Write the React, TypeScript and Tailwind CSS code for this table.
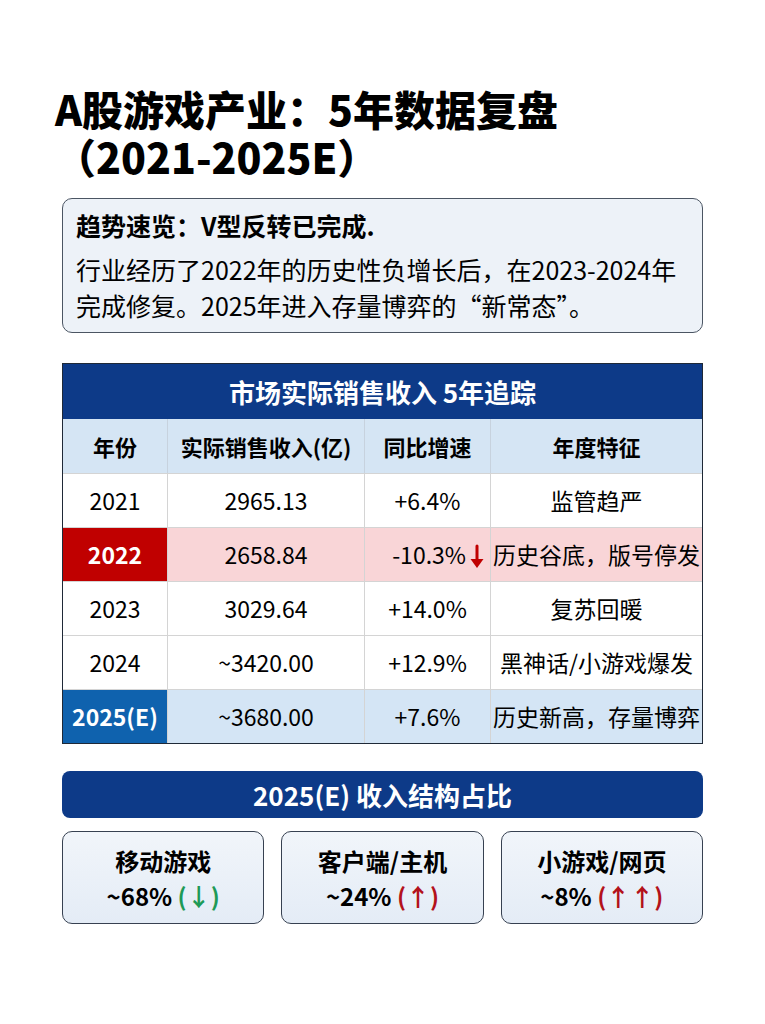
import React from 'react';

type Row = {
  year: string;
  revenue: string;
  growth: string;
  note: string;
  tone?: 'low' | 'est';
};

const ROWS: Row[] = [
  { year: '2021', revenue: '2965.13', growth: '+6.4%', note: '监管趋严' },
  { year: '2022', revenue: '2658.84', growth: '-10.3%', note: '历史谷底，版号停发', tone: 'low' },
  { year: '2023', revenue: '3029.64', growth: '+14.0%', note: '复苏回暖' },
  { year: '2024', revenue: '~3420.00', growth: '+12.9%', note: '黑神话/小游戏爆发' },
  { year: '2025(E)', revenue: '~3680.00', growth: '+7.6%', note: '历史新高，存量博弈', tone: 'est' },
];

const FONT = { fontFamily: '"Noto Sans CJK SC", "Noto Sans", sans-serif' };

const COLS = 'grid grid-cols-[105px_197px_126px_1fr]';

export default function App() {
  return (
    <div className="min-h-[1024px] w-[765px] bg-white text-black" style={FONT}>
      <div className="px-[62px] pt-[84px] pb-10">
        {/* 标题 */}
        <h1 className="-ml-[7px] text-[41px] font-black leading-[48px]">
          <div>A股游戏产业：5年数据复盘</div>
          <div>（2021-2025E）</div>
        </h1>

        {/* 趋势速览 */}
        <div className="mt-[18px] rounded-[10px] border-[1.5px] border-[#4b5563] bg-[#edf2f8] px-[13px] pt-[8px] pb-[9px]">
          <div className="text-[25px] font-bold leading-[36px]">趋势速览：V型反转已完成.</div>
          <p className="mt-[8px] whitespace-nowrap text-[25px] leading-[36px]">
            行业经历了2022年的历史性负增长后，在2023-2024年
            <br />
            完成修复。2025年进入存量博弈的“新常态”。
          </p>
        </div>

        {/* 销售收入表 */}
        <div className="mt-[30px] border-[1.5px] border-[#1f2937]">
          <div className="flex h-[55px] items-center justify-center bg-[#0d3a88] text-[26px] font-bold text-white">
            市场实际销售收入 5年追踪
          </div>
          <div className={`${COLS} h-[54px] bg-[#d5e5f4] text-[22px] font-bold`}>
            <div className="flex items-center justify-center border-r border-[#c7d2de]">年份</div>
            <div className="flex items-center justify-center border-r border-[#c7d2de]">实际销售收入(亿)</div>
            <div className="flex items-center justify-center border-r border-[#c7d2de]">同比增速</div>
            <div className="flex items-center justify-center">年度特征</div>
          </div>
          {ROWS.map(r => {
            const rowBg = r.tone === 'low' ? 'bg-[#f9d5d7]' : r.tone === 'est' ? 'bg-[#d4e5f5]' : 'bg-white';
            const yearCell =
              r.tone === 'low'
                ? 'bg-[#c00000] text-white font-bold'
                : r.tone === 'est'
                ? 'bg-[#0f62ae] text-white font-bold'
                : '';
            return (
              <div key={r.year} className={`${COLS} h-[54px] border-t border-[#d4d4d4] text-[23px] ${rowBg}`}>
                <div className={`flex items-center justify-center border-r border-[#d4d4d4] ${yearCell}`}>{r.year}</div>
                <div className="flex items-center justify-center border-r border-[#d4d4d4]">{r.revenue}</div>
                <div
                  className={`flex items-center border-r border-[#d4d4d4] ${
                    r.tone === 'low' ? 'justify-end pr-[4px]' : 'justify-center'
                  }`}
                >
                  {r.growth}
                  {r.tone === 'low' && (
                    <svg width="18" height="26" viewBox="0 0 18 26" className="ml-[2px] mt-[4px]">
                      <path d="M9 2 V18" stroke="#c00000" strokeWidth="3" strokeLinecap="round" />
                      <path d="M2.5 15 L9 24 L15.5 15 Z" fill="#c00000" />
                    </svg>
                  )}
                </div>
                <div className="flex items-center justify-center whitespace-nowrap">{r.note}</div>
              </div>
            );
          })}
        </div>

        {/* 收入结构 */}
        <div className="mt-[27px] flex h-[47px] items-center justify-center rounded-[8px] bg-[#0d3a88] text-[26px] font-bold text-white">
          2025(E) 收入结构占比
        </div>
        <div className="mt-[13px] grid grid-cols-3 gap-[17px]">
          <ShareCard title="移动游戏" value="~68%" arrow="(↓)" color="text-[#1e9a57]" />
          <ShareCard title="客户端/主机" value="~24%" arrow="(↑)" color="text-[#b3121b]" />
          <ShareCard title="小游戏/网页" value="~8%" arrow="(↑↑)" color="text-[#b3121b]" />
        </div>
      </div>
    </div>
  );
}

function ShareCard({ title, value, arrow, color }: { title: string; value: string; arrow: string; color: string }) {
  return (
    <div className="flex h-[93px] flex-col items-center justify-center rounded-[10px] border-[1.5px] border-[#374151] bg-gradient-to-b from-[#f1f5fa] to-[#e4ecf6] text-[24px] font-bold leading-[35px]">
      <div>{title}</div>
      <div>
        {value} <span className={color}>{arrow}</span>
      </div>
    </div>
  );
}
